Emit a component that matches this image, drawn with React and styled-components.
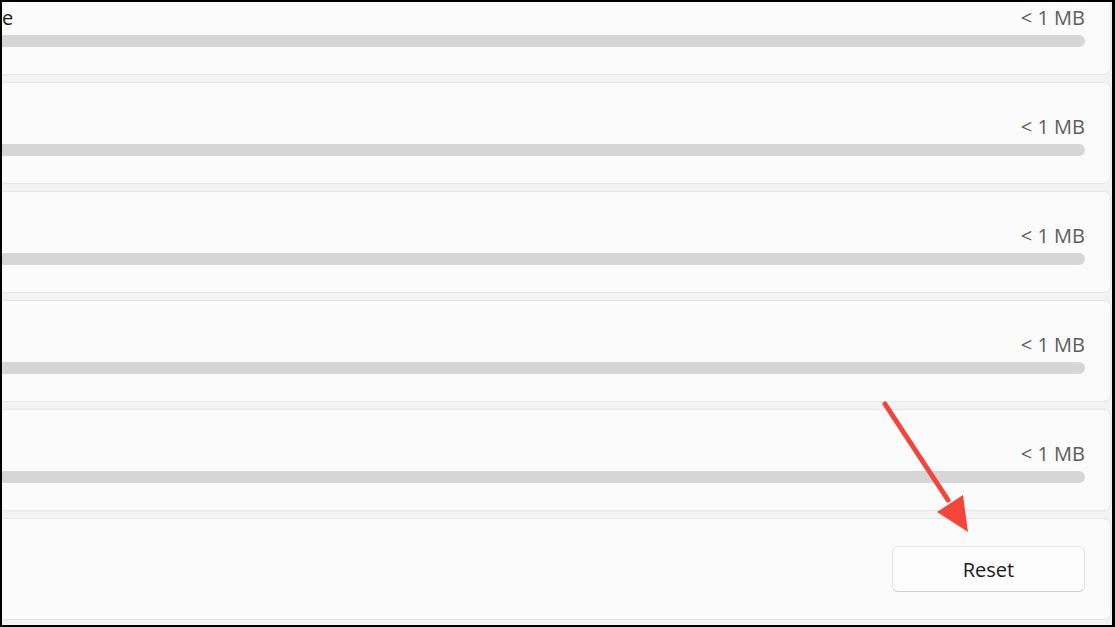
import React from 'react';
import styled, { createGlobalStyle } from 'styled-components';

const GlobalStyle = createGlobalStyle`
  html, body {
    margin: 0;
    padding: 0;
    background: #000;
  }
  body {
    font-family: 'Open Sans', 'Noto Sans', sans-serif;
  }
`;

const Frame = styled.div`
  position: relative;
  width: 1115px;
  height: 627px;
  box-sizing: border-box;
  border-style: solid;
  border-color: #000;
  border-width: 2px 3px 2px 2px;
  background: #f3f3f3;
  overflow: hidden;
`;

const List = styled.div`
  display: flex;
  flex-direction: column;
  gap: 7px;
  margin: -29px 1px 0 -40px;
`;

const Card = styled.div`
  box-sizing: border-box;
  height: 102px;
  background: #fbfbfb;
  border: 1px solid #e5e5e5;
  border-radius: 7px;
  padding: 30px 25px 0 39px;
  display: flex;
  flex-direction: column;
`;

const Row = styled.div`
  display: flex;
  justify-content: space-between;
  align-items: center;
  height: 28px;
  font-size: 20px;
  line-height: 28px;
`;

const Label = styled.span`
  color: #1b1b1b;
  white-space: nowrap;
`;

const Size = styled.span`
  color: #5d5d5d;
  margin-left: auto;
`;

const Track = styled.div`
  margin: 3px 0 0 -39px;
  height: 12px;
  border-radius: 6px;
  background: #d6d6d6;
`;

const FooterCard = styled(Card)`
  padding: 27px 25px 0 39px;
  align-items: flex-end;
`;

const ResetButton = styled.button`
  width: 193px;
  height: 46px;
  box-sizing: border-box;
  background: #fdfdfd;
  border: 1px solid #e2e2e2;
  border-bottom-color: #cdcdcd;
  border-radius: 6px;
  font-family: 'Open Sans', 'Noto Sans', sans-serif;
  font-size: 20px;
  color: #1a1a1a;
  cursor: pointer;
`;

const Arrow = styled.svg`
  position: absolute;
  left: 0;
  top: 0;
  pointer-events: none;
`;

const items = [
  { label: 'e', size: '< 1 MB' },
  { label: '', size: '< 1 MB' },
  { label: '', size: '< 1 MB' },
  { label: '', size: '< 1 MB' },
  { label: '', size: '< 1 MB' },
];

function App() {
  return (
    <>
      <GlobalStyle />
      <Frame>
        <List>
          {items.map((item, i) => (
            <Card key={i}>
              <Row>
                {item.label && <Label>{item.label}</Label>}
                <Size>{item.size}</Size>
              </Row>
              <Track />
            </Card>
          ))}
          <FooterCard>
            <ResetButton>Reset</ResetButton>
          </FooterCard>
        </List>
        <Arrow width="1110" height="623" viewBox="2 2 1110 623">
          <line x1="885" y1="404" x2="948" y2="500" stroke="#f2453c" strokeWidth="5" strokeLinecap="round" />
          <polygon points="937,512 963,495 968,532" fill="#f2453c" />
        </Arrow>
      </Frame>
    </>
  );
}

export default App;
